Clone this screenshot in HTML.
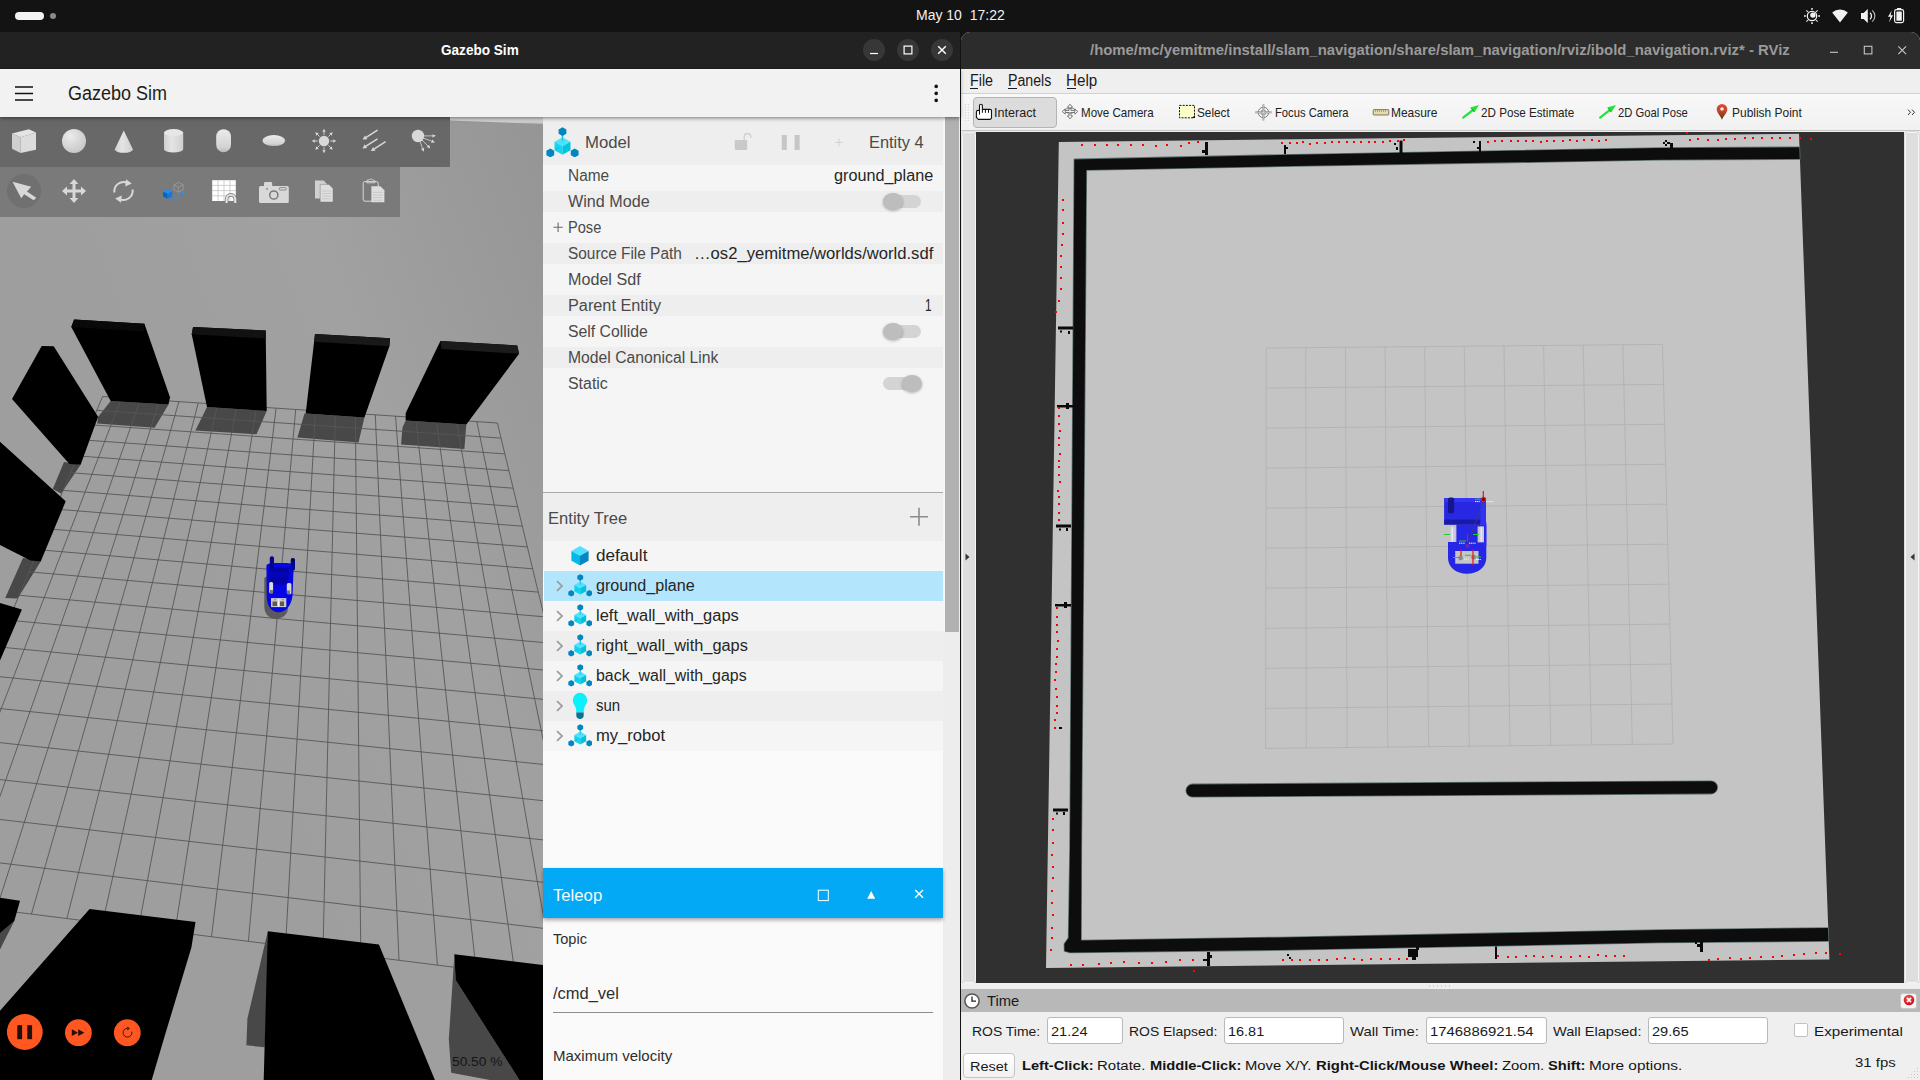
<!DOCTYPE html>
<html><head><meta charset="utf-8"><title>Gazebo Sim + RViz</title>
<style>
*{box-sizing:border-box;margin:0;padding:0}
html,body{width:1920px;height:1080px;overflow:hidden;background:#131313}
body{position:relative;font-family:"Liberation Sans","DejaVu Sans",sans-serif;color:#222}
.abs{position:absolute}
.t{position:absolute;white-space:nowrap;line-height:1;transform-origin:0 0}
.wb{top:39px;width:22px;height:22px;border-radius:11px;background:#373737}
.stripe{position:absolute;left:543px;width:400px;height:21px;background:#eeeeee}
.trk{position:absolute;left:883px;width:38px;height:13px;border-radius:7px;background:#d4d4d4}
.knob{position:absolute;width:20px;height:17px;border-radius:50%;background:#bdbdbd;box-shadow:0 1px 3px rgba(0,0,0,.28)}
.row{position:absolute;left:543px;width:400px;height:30px}
.fld{position:absolute;height:27px;background:#fff;border:1px solid #b9b9b9;border-radius:3px}
</style></head>
<body>
<div class="abs" style="left:0;top:0;width:1920px;height:32px;background:#131313"></div>
<div class="abs" style="left:15px;top:12px;width:29px;height:8px;border-radius:4px;background:#f2f2f2"></div>
<div class="abs" style="left:50px;top:13px;width:6px;height:6px;border-radius:3px;background:#8a8a8a"></div>
<div class="t" style="left:916.3px;top:8.0px;font-size:14.6px;color:#f2f2f2;transform:scaleX(0.959);">May 10&nbsp; 17:22</div>
<svg class="abs" style="left:1800px;top:4px" width="112" height="24" viewBox="1800 4 112 24">
  <circle cx="1812" cy="16" r="4.700" stroke="#f2f2f2" fill="none" stroke-width="1.300"/>
  <g fill="#cfcfcf"><rect x="1811.100" y="8" width="1.800" height="1.800"/><rect x="1811.100" y="22.200" width="1.800" height="1.800"/><rect x="1804" y="15.100" width="1.800" height="1.800"/><rect x="1818.200" y="15.100" width="1.800" height="1.800"/></g>
  <path d="M1806.300 10.300l1.900 1.900M1817.700 10.300l-1.900 1.900M1806.300 21.700l1.900-1.900M1817.700 21.700l-1.900-1.900" stroke="#e0e0e0" stroke-width="1.100"/>
  <circle cx="1812.900" cy="15.100" r="2.700" fill="#f2f2f2"/>
  <path d="M1832.2 12.6a11.5 11.5 0 0 1 15.6 0L1840 22.6z" fill="#f2f2f2"/>
  <path d="M1861 13h2.6l4.2-4v14l-4.2-4H1861z" fill="#f2f2f2"/>
  <path d="M1870 12.8a4.2 4.2 0 0 1 0 6.4" stroke="#f2f2f2" stroke-width="1.3" fill="none"/>
  <path d="M1872.3 10.3a7.6 7.6 0 0 1 0 11.4" stroke="#bdbdbd" stroke-width="1.1" fill="none"/>
  <path d="M1891.7 10.400l-3.700 6.400h2.500l-1.500 5.600 4.100-7.200h-2.500z" fill="#f2f2f2"/>
  <rect x="1894.6" y="9.6" width="9" height="13" rx="1.8" fill="none" stroke="#f2f2f2" stroke-width="1.2"/>
  <rect x="1897" y="8" width="4.2" height="1.8" fill="#f2f2f2"/>
  <rect x="1896.4" y="11.4" width="5.4" height="9.4" rx=".5" fill="#f2f2f2"/>
</svg>

<div class="abs" style="left:0;top:32px;width:960px;height:1048px;background:#fafafa"></div>
<div class="abs" style="left:0;top:32px;width:960px;height:37px;background:#222222"></div>
<div class="t" style="left:441.3px;top:42.0px;font-size:15px;color:#ffffff;font-weight:bold;transform:scaleX(0.905);">Gazebo Sim</div>
<div class="abs wb" style="left:863px"></div><div class="abs wb" style="left:897px"></div><div class="abs wb" style="left:931px"></div>
<svg class="abs" style="left:862px;top:38px" width="92" height="24" viewBox="862 38 92 24" stroke="#ffffff" stroke-width="1.2" fill="none">
  <path d="M870 53.5h8"/><rect x="904.1" y="46.1" width="7.8" height="7.8"/><path d="M938.2 46.2l7.6 7.6M945.8 46.2l-7.6 7.6" stroke-width="1.4"/>
</svg>
<div class="abs" style="left:0;top:69px;width:960px;height:48px;background:#f2f2f2;box-shadow:0 1px 4px rgba(0,0,0,.5);z-index:5"></div>
<svg class="abs" style="left:10px;top:80px;z-index:6" width="30" height="26" viewBox="10 80 30 26"><path d="M15 87h18M15 93.5h18M15 100h18" stroke="#111" stroke-width="1.7"/></svg>
<svg class="abs" style="left:930px;top:80px;z-index:6" width="12" height="26" viewBox="930 80 12 26" fill="#111"><circle cx="936.2" cy="86.4" r="1.8"/><circle cx="936.2" cy="93.4" r="1.8"/><circle cx="936.2" cy="100.4" r="1.8"/></svg>
<div class="t" style="left:68.2px;top:84.0px;font-size:19.6px;color:#1c1c1c;transform:scaleX(0.918);z-index:6;">Gazebo Sim</div>
<div class="abs" style="left:0;top:117px;width:543px;height:963px;overflow:hidden;background:#9d9d9d">
<svg class="abs" style="left:0;top:0" width="543" height="963" viewBox="0 117 543 963">
<defs><linearGradient id="bgg" x1="1" y1="0" x2="0.3" y2="0.45"><stop offset="0" stop-color="#959595"/><stop offset=".5" stop-color="#a1a1a1"/><stop offset="1" stop-color="#9e9e9e"/></linearGradient><linearGradient id="sky" x1="0" y1="0" x2="0" y2="1"><stop offset="0" stop-color="#d6d6d6"/><stop offset=".7" stop-color="#cfcfcf"/><stop offset="1" stop-color="#b4b4b4"/></linearGradient></defs>
<rect x="0" y="117" width="543" height="963" fill="url(#bgg)"/>
<polygon points="360,117 543,117 543,124 450,120.600 380,117.800" fill="url(#sky)"/>
<polygon points="110.7,401.0 168.5,404.6 154.6,427.8 97.2,423.4 98.0,417.0" fill="#484848"/>
<polygon points="207.0,407.0 266.7,411.1 256.5,434.3 195.4,430.6" fill="#484848"/>
<polygon points="304.5,413.5 364.4,417.6 358.5,442.6 297.4,437.6" fill="#484848"/>
<polygon points="405.7,420.4 466.3,424.4 464.4,449.1 401.1,444.4 402.4,427.8" fill="#484848"/>
<polygon points="64.0,462.0 80.6,464.8 61.1,493.5 52.8,488.9" fill="#484848"/>
<polygon points="23.1,557.8 40.7,561.5 17.6,598.5 5.2,598.1" fill="#484848"/>
<polygon points="267.8,931.3 247.4,1018.8 246.4,1045.3 264.7,1047.3 268.0,980.0" fill="#484848"/>
<polygon points="454.3,956.0 448.8,1039.2 451.2,1072.8 490.0,1080.0 519.4,1080.0 455.7,980.1" fill="#484848"/>
<polygon points="14.3,921.0 0.0,933.3 0.0,949.6" fill="#484848"/>
<path d="M264.300 578L267 576V600L288 608C288 614 283 618.700 276 618.700C268 618.700 264.300 613 264.300 606z" fill="#5b5b5b"/>
<path d="M102.6 396.5L-107.5 896.6M102.6 396.5L497.4 423.0M121.6 397.7L-73.2 900.9M96.8 410.3L501.0 438.1M140.6 399.0L-38.6 905.3M90.7 424.8L504.8 453.9M159.7 400.3L-3.7 909.6M84.3 440.0L508.9 470.6M178.9 401.6L31.4 914.1M77.6 455.9L513.1 488.2M198.2 402.9L66.9 918.5M70.6 472.7L517.6 506.7M217.5 404.2L102.6 923.0M63.1 490.4L522.3 526.2M236.9 405.5L138.6 927.5M55.3 509.1L527.3 546.9M256.5 406.8L174.9 932.1M47.0 528.8L532.6 568.8M276.1 408.1L211.5 936.7M38.2 549.7L538.2 592.1M295.7 409.4L248.4 941.3M28.9 571.8L544.2 616.8M315.5 410.8L285.5 946.0M19.1 595.3L550.6 643.2M335.4 412.1L323.0 950.7M8.6 620.2L557.4 671.3M355.3 413.4L360.8 955.5M-2.6 646.8L564.7 701.4M375.3 414.8L399.0 960.3M-14.5 675.3L572.5 733.6M395.5 416.1L437.4 965.1M-27.3 705.7L580.8 768.3M415.7 417.5L476.1 970.0M-41.0 738.3L589.9 805.7M436.0 418.9L515.2 974.9M-55.8 773.4L599.6 846.2M456.3 420.2L554.6 979.9M-71.7 811.2L610.2 890.0M476.8 421.6L594.3 984.9M-88.9 852.2L621.8 937.8M497.4 423.0L634.4 989.9M-107.5 896.6L634.4 989.9" stroke="#575757" stroke-width=".9" fill="none"/>
<polygon points="74.1,319.4 144.4,323.7 170.0,397.2 168.5,404.6 110.7,401.0 71.3,326.9" fill="#000"/>
<polygon points="193.1,326.9 265.7,330.6 266.7,411.1 207.0,407.0 191.7,334.3" fill="#000"/>
<polygon points="315.0,333.9 390.0,338.3 389.4,346.3 364.4,417.6 305.7,413.5 314.1,341.7" fill="#000"/>
<polygon points="440.4,341.1 517.2,345.4 519.1,353.7 466.3,424.4 405.7,420.4 405.7,413.0" fill="#000"/>
<polygon points="41.7,345.9 53.7,346.3 98.1,416.7 80.6,464.8 69.4,463.9 12.0,399.0" fill="#000"/>
<polygon points="0.0,441.7 65.7,501.3 40.7,561.5 30.6,560.6 0.0,545.0" fill="#000"/>
<polygon points="0.0,603.1 21.9,609.6 0.0,660.6" fill="#000"/>
<polygon points="0.0,897.7 20.0,900.7 14.3,921.1 0.0,933.3" fill="#000"/>
<polygon points="89.6,908.9 195.5,922.1 191.4,947.6 165.0,1035.0 151.7,1080.0 0.0,1080.0 0.0,1010.7" fill="#000"/>
<polygon points="267.8,931.3 378.9,944.5 434.9,1080.0 263.7,1080.0" fill="#000"/>
<polygon points="454.3,954.3 543.0,965.0 543.0,1080.0 519.4,1080.0 455.7,980.1" fill="#000"/>
<polygon points="74.1,319.4 144.4,323.7 143.5,331.5 71.3,326.9" fill="#090909"/>
<polygon points="193.1,326.9 265.7,330.6 265.8,338.5 191.7,334.3" fill="#111111"/>
<polygon points="315.0,333.9 390.0,338.3 389.4,346.3 314.1,341.7" fill="#191919"/>
<polygon points="440.4,341.1 517.2,345.4 519.1,353.7 441.3,349.1" fill="#1b1b1b"/>
<g>
<path d="M266.400 566C266.400 563.500 270 563.100 280 563.100S293.700 563.500 293.700 566L292.500 596C291 606 286 612.200 278.500 612.200C271 612.200 267.500 606 266.800 598z" fill="#0505e6"/>
<path d="M268.700 567.800H289.500L288 584.400H270z" fill="#0303a6"/>
<rect x="268.700" y="572" width="20.500" height="5" fill="#0404b8"/>
<rect x="269.800" y="556.200" width="4.200" height="12" rx="2" fill="#02028a"/>
<rect x="290.700" y="558" width="4.300" height="12.600" rx="2" fill="#02028a"/><circle cx="292.800" cy="559.800" r="1.300" fill="#060618"/>
<rect x="269.200" y="581.900" width="3.900" height="11.300" rx="1.500" fill="#dcdcdc"/><rect x="270" y="590" width="3" height="3.500" fill="#777"/>
<rect x="286.800" y="583" width="4.600" height="11.200" rx="1.500" fill="#d4d4d4"/><rect x="287" y="590.500" width="3" height="3.500" fill="#777"/>
<rect x="271" y="598.100" width="15.300" height="9" fill="#c9c9c9"/>
<rect x="272.500" y="601.500" width="4.500" height="4.500" fill="#595959"/><rect x="280" y="601.500" width="4" height="4.500" fill="#595959"/><rect x="278" y="598.500" width="1.200" height="8.500" fill="#f2f2f2"/>
<rect x="274" y="599" width="2" height="1.300" fill="#ff7a1a"/><rect x="282" y="599" width="2" height="1.300" fill="#ff7a1a"/>
</g>
<rect x="0" y="117" width="450" height="50" fill="#686868"/><rect x="0" y="167" width="400" height="50" fill="#7a7a7a"/>
<circle cx="24" cy="191" r="17" fill="#707070"/>
<defs><radialGradient id="sph" cx=".35" cy=".3" r=".8"><stop offset="0" stop-color="#ececec"/><stop offset="1" stop-color="#c4c4c4"/></radialGradient><linearGradient id="cyl" x1="0" y1="0" x2="1" y2="0"><stop offset="0" stop-color="#d0d0d0"/><stop offset=".4" stop-color="#e4e4e4"/><stop offset="1" stop-color="#cfcfcf"/></linearGradient><linearGradient id="cap" x1="0" y1="0" x2="0" y2="1"><stop offset="0" stop-color="#ececec"/><stop offset=".8" stop-color="#d2d2d2"/><stop offset="1" stop-color="#b8b8b8"/></linearGradient></defs>
<path d="M12 133.600L28.800 129.200 36 132.400 20.600 137.200z" fill="#e4e4e4"/><path d="M12 133.600L20.600 137.200V153L12 148.800z" fill="#cfcfcf"/><path d="M20.600 137.200L36 132.400V149.800L20.600 153z" fill="#dcdcdc"/>
<circle cx="74" cy="141" r="12" fill="url(#sph)"/>
<path d="M123.750 130.500L133 149.600A9.200 3.600 0 0 1 114.700 149.600z" fill="url(#cyl)"/>
<path d="M164 132.600V149A9.600 3.600 0 0 0 183.200 149V132.600z" fill="url(#cyl)"/><ellipse cx="173.600" cy="132.600" rx="9.600" ry="3.500" fill="#e6e6e6"/>
<rect x="216.200" y="129.200" width="14.800" height="23" rx="7.400" fill="url(#cap)"/>
<ellipse cx="273.800" cy="140.600" rx="11.300" ry="5.500" fill="url(#cap)"/>
<circle cx="324" cy="141" r="5.200" fill="#d8d8d8"/><path d="M330.20 141.00L333.50 141.00" stroke="#d8d8d8" stroke-width=".9"/><path d="M336.20 141.00L333.20 142.70L333.20 139.30z" fill="#d8d8d8"/><path d="M328.38 145.38L330.72 147.72" stroke="#d8d8d8" stroke-width=".9"/><path d="M332.63 149.63L329.30 148.71L331.71 146.30z" fill="#d8d8d8"/><path d="M324.00 147.20L324.00 150.50" stroke="#d8d8d8" stroke-width=".9"/><path d="M324.00 153.20L322.30 150.20L325.70 150.20z" fill="#d8d8d8"/><path d="M319.62 145.38L317.28 147.72" stroke="#d8d8d8" stroke-width=".9"/><path d="M315.37 149.63L316.29 146.30L318.70 148.71z" fill="#d8d8d8"/><path d="M317.80 141.00L314.50 141.00" stroke="#d8d8d8" stroke-width=".9"/><path d="M311.80 141.00L314.80 139.30L314.80 142.70z" fill="#d8d8d8"/><path d="M319.62 136.62L317.28 134.28" stroke="#d8d8d8" stroke-width=".9"/><path d="M315.37 132.37L318.70 133.29L316.29 135.70z" fill="#d8d8d8"/><path d="M324.00 134.80L324.00 131.50" stroke="#d8d8d8" stroke-width=".9"/><path d="M324.00 128.80L325.70 131.80L322.30 131.80z" fill="#d8d8d8"/><path d="M328.38 136.62L330.72 134.28" stroke="#d8d8d8" stroke-width=".9"/><path d="M332.63 132.37L331.71 135.70L329.30 133.29z" fill="#d8d8d8"/>
<path d="M377.50 130.10L366.14 137.34" stroke="#d8d8d8" stroke-width="1.5"/><path d="M362.60 139.60L364.96 135.49L367.32 139.20z" fill="#d8d8d8"/><path d="M377.50 138.90L365.95 146.16" stroke="#d8d8d8" stroke-width="1.5"/><path d="M362.40 148.40L364.78 144.30L367.13 148.03z" fill="#d8d8d8"/><path d="M385.60 141.60L374.33 148.83" stroke="#d8d8d8" stroke-width="1.5"/><path d="M370.80 151.10L373.15 146.98L375.52 150.68z" fill="#d8d8d8"/>
<circle cx="418" cy="136" r="6.200" fill="#d8d8d8"/>
<path d="M423.00 135.94L432.40 135.84" stroke="#d8d8d8" stroke-width="0.8"/><path d="M436.00 135.80L432.42 137.54L432.38 134.14z" fill="#d8d8d8"/>
<path d="M422.68 137.76L431.63 141.13" stroke="#d8d8d8" stroke-width="0.8"/><path d="M435.00 142.40L431.03 142.72L432.23 139.54z" fill="#d8d8d8"/>
<path d="M421.54 139.54L427.85 145.85" stroke="#d8d8d8" stroke-width="0.8"/><path d="M430.40 148.40L426.65 147.06L429.06 144.65z" fill="#d8d8d8"/>
<path d="M419.72 140.69L422.56 148.42" stroke="#d8d8d8" stroke-width="0.8"/><path d="M423.80 151.80L420.96 149.01L424.16 147.83z" fill="#d8d8d8"/>
<path d="M12.500 181.700L31.250 186.750 26.900 191.500 36.250 197.750 33.750 200.200 24.200 194.200 21.250 198.250z" fill="#d8d8d8"/>
<path d="M74 179l4.400 5h-2.900v5.500H81v-2.900l5 4.400-5 4.400v-2.900h-5.500V198h2.900L74 203l-4.400-5h2.900v-5.500H67v2.900l-5-4.400 5-4.400v2.900h5.500V184h-2.900z" fill="#d8d8d8"/>
<path d="M114.400 192.500a9.300 9.300 0 0 1 13.200-9.600" fill="none" stroke="#d8d8d8" stroke-width="2"/><path d="M126 179.200l5.800 4.200-6.600 3z" fill="#d8d8d8"/>
<path d="M132.600 189.500a9.300 9.300 0 0 1-13.200 9.600" fill="none" stroke="#d8d8d8" stroke-width="2"/><path d="M121 202.800l-5.800-4.200 6.600-3z" fill="#d8d8d8"/>
<path d="M163 191.400l4.600-2.400 4.600 2.400v5l-4.600 2.400-4.600-2.400z" fill="#1f8ff0"/><path d="M163 191.400l4.600 2.400v5l-4.600-2.400z" fill="#0f62b8"/><path d="M167.600 193.800l4.600-2.400v5l-4.600 2.400z" fill="#1976d2"/>
<path d="M174 184.800l4.600-2.400 4.600 2.400v5l-4.600 2.400-4.600-2.400zM174 184.800l4.600 2.400 4.600-2.400M178.600 187.200v5" fill="none" stroke="#a4a4a4" stroke-width=".7"/>
<path d="M170.500 198.200l2.500 1.400 11.400-6-3-1.800" fill="none" stroke="#2a8fef" stroke-width="1"/>
<rect x="212.200" y="180.200" width="23.600" height="20.800" fill="#ffffff"/><path d="M218.100 180.200v20.800M224 180.200v20.800M229.900 180.200v20.800M212.200 185.400h23.600M212.200 190.600h23.600M212.200 195.800h23.600" stroke="#c4c4c4" stroke-width=".8"/>
<path d="M226.600 203v-3.800a4.300 4.300 0 0 1 8.600 0V203" fill="none" stroke="#8a8a8a" stroke-width="3.600"/><path d="M226.600 203v-3.800a4.300 4.300 0 0 1 8.600 0V203" fill="none" stroke="#e8e8e8" stroke-width="1.800"/>
<path d="M260.500 186h3.500v-2.600a1.400 1.400 0 0 1 1.400-1.400h5.400a1.400 1.400 0 0 1 1.400 1.400V186h15.100a1.500 1.500 0 0 1 1.500 1.500v14a1.500 1.500 0 0 1-1.500 1.500h-26.800a1.500 1.500 0 0 1-1.500-1.500v-14a1.500 1.500 0 0 1 1.500-1.500z" fill="#d8d8d8"/>
<circle cx="273.800" cy="195" r="4.100" fill="none" stroke="#7a7a7a" stroke-width="1.500"/><rect x="279.300" y="187.600" width="7" height="2.400" rx=".6" fill="none" stroke="#7a7a7a" stroke-width=".8"/><circle cx="267" cy="188.800" r=".9" fill="#7a7a7a"/>
<path d="M315 180.600h8.600l3.400 3.400V198.400H315z" fill="#d0d0d0"/><path d="M320.200 184.400h8.800l4 4V202h-12.800z" fill="#dedede" stroke="#7a7a7a" stroke-width=".5"/><path d="M322 191h9.400M322 193.600h9.400M322 196.200h9.400M322 198.800h9.400" stroke="#c2c2c2" stroke-width=".8"/>
<rect x="363.200" y="181.600" width="15" height="19.600" rx="1.600" fill="none" stroke="#d8d8d8" stroke-width="1"/><path d="M366.800 182.800v-1.600a1.200 1.200 0 0 1 1.200-1.200h1a2 1.600 0 0 1 3.600 0h1a1.200 1.200 0 0 1 1.200 1.200v1.600z" fill="none" stroke="#d8d8d8" stroke-width=".9"/>
<path d="M371.400 186.200h9l4 4V202.200h-13z" fill="#dedede"/><path d="M373 192.400h9.600M373 195h9.600M373 197.600h9.600M373 200.200h9.600" stroke="#c2c2c2" stroke-width=".8"/>
<circle cx="24.800" cy="1032" r="17.900" fill="#ff5722"/><rect x="17.300" y="1025.200" width="4.800" height="14" fill="#241008"/><rect x="27.300" y="1025.200" width="4.800" height="14" fill="#241008"/>
<circle cx="78.400" cy="1032.700" r="13.400" fill="#ff5722"/><path d="M71.800 1029.300l6.200 3.400-6.200 3.400zM78.200 1029.300l6.200 3.400-6.200 3.400z" fill="#241008"/>
<circle cx="127.300" cy="1032.700" r="13.400" fill="#ff5722"/><path d="M127.500 1028.300a4.400 4.400 0 1 0 4.300 3.400" fill="none" stroke="#3a1a0c" stroke-width="1"/><path d="M127.300 1026.400l2.600 2-2.600 2z" fill="#3a1a0c"/>
</svg>
</div>
<div class="t" style="left:452.2px;top:1055.0px;font-size:13.6px;color:#161616;transform:scaleX(1.010);">50.50 %</div>
<div class="abs" style="left:543px;top:117px;width:400px;height:376px;background:#f5f5f5"></div>
<div class="abs" style="left:943px;top:117px;width:17px;height:963px;background:#ededed"></div>
<div class="abs" style="left:943px;top:117px;width:2px;height:515px;background:#f5f5f5"></div>
<div class="abs" style="left:945px;top:117px;width:14px;height:515px;background:#b1b1b1"></div>
<div class="abs" style="left:543px;top:117px;width:400px;height:48px;background:#eeeeee"></div>
<svg class="abs" style="left:545.5px;top:126.6px" width="33" height="30.6" viewBox="0 0 33 30.6"><g>
<path d="M16.5 8v6" stroke="#1ab5dc" stroke-width="1.4"/>
<path d="M16.5 0.2l3.9 2.2v4.4l-3.9 2.2-3.9-2.2V2.4z" fill="#0286be"/>
<path d="M4.3 21.6l3.9 2.2v4.4l-3.9 2.2-3.9-2.2v-4.4z" fill="#0286be"/>
<path d="M28.7 21.6l3.9 2.2v4.4l-3.9 2.2-3.9-2.2v-4.4z" fill="#0286be"/>
<path d="M16.5 10.2l8 4.5-8 4.5-8-4.5z" fill="#4fe2ff"/>
<path d="M8.5 14.7l8 4.5v8.6l-8-4.5z" fill="#12d3f0"/>
<path d="M24.5 14.7l-8 4.5v8.6l8-4.5z" fill="#00c5de"/>
<path d="M16.5 10.4v4.2" stroke="#29c4ea" stroke-width="1.4"/>
<path d="M9.6 22.4l3-1.8M23.4 22.4l-3-1.8" stroke="#0bbbd6" stroke-width="1"/>
</g></svg>
<div class="t" style="left:584.7px;top:134.0px;font-size:16.2px;color:#4a4a4a;transform:scaleX(1.034);">Model</div>
<div class="t" style="left:868.9px;top:134.0px;font-size:16.2px;color:#4a4a4a;transform:scaleX(1.013);">Entity 4</div>
<svg class="abs" style="left:730px;top:128px" width="120" height="28" viewBox="730 128 120 28">
<rect x="734.8" y="140" width="12.4" height="10" rx="1.2" fill="#c9c9c9"/>
<path d="M744.2 140v-3.2a3.3 3.3 0 0 1 6.6 0v1.2" fill="none" stroke="#d0d0d0" stroke-width="1.3"/>
<rect x="781.8" y="135" width="5" height="15" fill="#c6c6c6"/><rect x="794.6" y="135" width="5" height="15" fill="#c6c6c6"/>
<path d="M835 142.4h8M839 138.4v8" stroke="#d2d2d2" stroke-width="1"/>
</svg>
<div class="t" style="left:568.4px;top:168.0px;font-size:15.6px;color:#4a4a4a;transform:scaleX(0.988);">Name</div>
<div class="stripe" style="top:191px"></div>
<div class="t" style="left:568.4px;top:194.0px;font-size:15.6px;color:#4a4a4a;transform:scaleX(1.035);">Wind Mode</div>
<div class="t" style="left:568.4px;top:220.0px;font-size:15.6px;color:#4a4a4a;transform:scaleX(0.937);">Pose</div>
<div class="stripe" style="top:243px"></div>
<div class="t" style="left:568.4px;top:246.0px;font-size:15.6px;color:#4a4a4a;transform:scaleX(0.987);">Source File Path</div>
<div class="t" style="left:568.4px;top:272.0px;font-size:15.6px;color:#4a4a4a;transform:scaleX(1.035);">Model Sdf</div>
<div class="stripe" style="top:295px"></div>
<div class="t" style="left:568.4px;top:298.0px;font-size:15.6px;color:#4a4a4a;transform:scaleX(1.043);">Parent Entity</div>
<div class="t" style="left:568.4px;top:324.0px;font-size:15.6px;color:#4a4a4a;transform:scaleX(1.012);">Self Collide</div>
<div class="stripe" style="top:347px"></div>
<div class="t" style="left:568.4px;top:350.0px;font-size:15.6px;color:#4a4a4a;transform:scaleX(1.009);">Model Canonical Link</div>
<div class="t" style="left:568.4px;top:376.0px;font-size:15.6px;color:#4a4a4a;transform:scaleX(1.021);">Static</div>
<svg class="abs" style="left:552px;top:221px" width="12" height="12" viewBox="552 221 12 12"><path d="M553.4 227.3h9.4M558.1 222.6v9.4" stroke="#6a6a6a" stroke-width="1.1"/></svg>
<div class="t" style="left:833.6px;top:168.0px;font-size:15.6px;color:#262626;transform:scaleX(1.040);">ground_plane</div>
<div class="t" style="left:693.7px;top:246.0px;font-size:15.6px;color:#262626;transform:scaleX(1.066);">&#8230;os2_yemitme/worlds/world.sdf</div>
<div class="t" style="left:925.2px;top:298.0px;font-size:15.6px;color:#262626;transform:scaleX(0.760);">1</div>
<div class="trk" style="top:195.0px"></div>
<div class="knob" style="left:883px;top:193.0px"></div>
<div class="trk" style="top:325.0px"></div>
<div class="knob" style="left:883px;top:323.0px"></div>
<div class="trk" style="top:377.0px"></div>
<div class="knob" style="left:902px;top:375.0px"></div>
<div class="abs" style="left:543px;top:492px;width:400px;height:1px;background:#a8a8a8"></div>
<div class="abs" style="left:543px;top:493px;width:400px;height:48px;background:#eeeeee"></div>
<div class="t" style="left:548.3px;top:510.0px;font-size:16.2px;color:#4a4a4a;transform:scaleX(1.024);">Entity Tree</div>
<svg class="abs" style="left:908px;top:506px" width="22" height="22" viewBox="908 506 22 22"><path d="M910 516.8h18M919 507.8v18" stroke="#8c8c8c" stroke-width="1.6"/></svg>
<div class="row" style="top:541px;background:#f5f5f5"></div>
<div class="t" style="left:596.4px;top:548.0px;font-size:15.6px;color:#262626;transform:scaleX(1.098);">default</div>
<svg class="abs" style="left:570px;top:545px" width="20" height="22" viewBox="0 0 20 22"><path d="M10 1l8.6 4.9L10 10.8 1.4 5.9z" fill="#4fe2ff"/><path d="M1.4 5.9L10 10.8v9.8l-8.6-4.9z" fill="#06b8e8"/><path d="M18.6 5.9L10 10.8v9.8l8.6-4.9z" fill="#0687c2"/></svg>
<div class="row" style="top:571px;background:#b3e5fc;left:544px;width:398.500px"></div>
<div class="t" style="left:596.4px;top:578.0px;font-size:15.6px;color:#262626;transform:scaleX(1.034);">ground_plane</div>
<svg class="abs" style="left:555px;top:580px" width="10" height="12" viewBox="0 0 10 12"><path d="M2 1.2l5 4.8-5 4.8" fill="none" stroke="#9a9a9a" stroke-width="1.7"/></svg>
<svg class="abs" style="left:567.6px;top:574.0px" width="24.5" height="22.7" viewBox="0 0 33 30.6"><g>
<path d="M16.5 8v6" stroke="#1ab5dc" stroke-width="1.4"/>
<path d="M16.5 0.2l3.9 2.2v4.4l-3.9 2.2-3.9-2.2V2.4z" fill="#0286be"/>
<path d="M4.3 21.6l3.9 2.2v4.4l-3.9 2.2-3.9-2.2v-4.4z" fill="#0286be"/>
<path d="M28.7 21.6l3.9 2.2v4.4l-3.9 2.2-3.9-2.2v-4.4z" fill="#0286be"/>
<path d="M16.5 10.2l8 4.5-8 4.5-8-4.5z" fill="#4fe2ff"/>
<path d="M8.5 14.7l8 4.5v8.6l-8-4.5z" fill="#12d3f0"/>
<path d="M24.5 14.7l-8 4.5v8.6l8-4.5z" fill="#00c5de"/>
<path d="M16.5 10.4v4.2" stroke="#29c4ea" stroke-width="1.4"/>
<path d="M9.6 22.4l3-1.8M23.4 22.4l-3-1.8" stroke="#0bbbd6" stroke-width="1"/>
</g></svg>
<div class="row" style="top:601px;background:#f5f5f5"></div>
<div class="t" style="left:596.4px;top:608.0px;font-size:15.6px;color:#262626;transform:scaleX(1.056);">left_wall_with_gaps</div>
<svg class="abs" style="left:555px;top:610px" width="10" height="12" viewBox="0 0 10 12"><path d="M2 1.2l5 4.8-5 4.8" fill="none" stroke="#9a9a9a" stroke-width="1.7"/></svg>
<svg class="abs" style="left:567.6px;top:604.0px" width="24.5" height="22.7" viewBox="0 0 33 30.6"><g>
<path d="M16.5 8v6" stroke="#1ab5dc" stroke-width="1.4"/>
<path d="M16.5 0.2l3.9 2.2v4.4l-3.9 2.2-3.9-2.2V2.4z" fill="#0286be"/>
<path d="M4.3 21.6l3.9 2.2v4.4l-3.9 2.2-3.9-2.2v-4.4z" fill="#0286be"/>
<path d="M28.7 21.6l3.9 2.2v4.4l-3.9 2.2-3.9-2.2v-4.4z" fill="#0286be"/>
<path d="M16.5 10.2l8 4.5-8 4.5-8-4.5z" fill="#4fe2ff"/>
<path d="M8.5 14.7l8 4.5v8.6l-8-4.5z" fill="#12d3f0"/>
<path d="M24.5 14.7l-8 4.5v8.6l8-4.5z" fill="#00c5de"/>
<path d="M16.5 10.4v4.2" stroke="#29c4ea" stroke-width="1.4"/>
<path d="M9.6 22.4l3-1.8M23.4 22.4l-3-1.8" stroke="#0bbbd6" stroke-width="1"/>
</g></svg>
<div class="row" style="top:631px;background:#eeeeee"></div>
<div class="t" style="left:596.4px;top:638.0px;font-size:15.6px;color:#262626;transform:scaleX(1.049);">right_wall_with_gaps</div>
<svg class="abs" style="left:555px;top:640px" width="10" height="12" viewBox="0 0 10 12"><path d="M2 1.2l5 4.8-5 4.8" fill="none" stroke="#9a9a9a" stroke-width="1.7"/></svg>
<svg class="abs" style="left:567.6px;top:634.0px" width="24.5" height="22.7" viewBox="0 0 33 30.6"><g>
<path d="M16.5 8v6" stroke="#1ab5dc" stroke-width="1.4"/>
<path d="M16.5 0.2l3.9 2.2v4.4l-3.9 2.2-3.9-2.2V2.4z" fill="#0286be"/>
<path d="M4.3 21.6l3.9 2.2v4.4l-3.9 2.2-3.9-2.2v-4.4z" fill="#0286be"/>
<path d="M28.7 21.6l3.9 2.2v4.4l-3.9 2.2-3.9-2.2v-4.4z" fill="#0286be"/>
<path d="M16.5 10.2l8 4.5-8 4.5-8-4.5z" fill="#4fe2ff"/>
<path d="M8.5 14.7l8 4.5v8.6l-8-4.5z" fill="#12d3f0"/>
<path d="M24.5 14.7l-8 4.5v8.6l8-4.5z" fill="#00c5de"/>
<path d="M16.5 10.4v4.2" stroke="#29c4ea" stroke-width="1.4"/>
<path d="M9.6 22.4l3-1.8M23.4 22.4l-3-1.8" stroke="#0bbbd6" stroke-width="1"/>
</g></svg>
<div class="row" style="top:661px;background:#f5f5f5"></div>
<div class="t" style="left:596.4px;top:668.0px;font-size:15.6px;color:#262626;transform:scaleX(1.022);">back_wall_with_gaps</div>
<svg class="abs" style="left:555px;top:670px" width="10" height="12" viewBox="0 0 10 12"><path d="M2 1.2l5 4.8-5 4.8" fill="none" stroke="#9a9a9a" stroke-width="1.7"/></svg>
<svg class="abs" style="left:567.6px;top:664.0px" width="24.5" height="22.7" viewBox="0 0 33 30.6"><g>
<path d="M16.5 8v6" stroke="#1ab5dc" stroke-width="1.4"/>
<path d="M16.5 0.2l3.9 2.2v4.4l-3.9 2.2-3.9-2.2V2.4z" fill="#0286be"/>
<path d="M4.3 21.6l3.9 2.2v4.4l-3.9 2.2-3.9-2.2v-4.4z" fill="#0286be"/>
<path d="M28.7 21.6l3.9 2.2v4.4l-3.9 2.2-3.9-2.2v-4.4z" fill="#0286be"/>
<path d="M16.5 10.2l8 4.5-8 4.5-8-4.5z" fill="#4fe2ff"/>
<path d="M8.5 14.7l8 4.5v8.6l-8-4.5z" fill="#12d3f0"/>
<path d="M24.5 14.7l-8 4.5v8.6l8-4.5z" fill="#00c5de"/>
<path d="M16.5 10.4v4.2" stroke="#29c4ea" stroke-width="1.4"/>
<path d="M9.6 22.4l3-1.8M23.4 22.4l-3-1.8" stroke="#0bbbd6" stroke-width="1"/>
</g></svg>
<div class="row" style="top:691px;background:#eeeeee"></div>
<div class="t" style="left:596.4px;top:698.0px;font-size:15.6px;color:#262626;transform:scaleX(0.962);">sun</div>
<svg class="abs" style="left:555px;top:700px" width="10" height="12" viewBox="0 0 10 12"><path d="M2 1.2l5 4.8-5 4.8" fill="none" stroke="#9a9a9a" stroke-width="1.7"/></svg>
<svg class="abs" style="left:570px;top:692px" width="20" height="28" viewBox="0 0 20 28"><path d="M10 .8a7.200 7.200 0 0 1 7.200 7.200c0 3.400-1.700 5-2.700 7.200-.6 1.400-.7 2.800-.8 4.300H6.300c-.1-1.500-.2-2.900-.8-4.300C4.500 13 2.800 11.400 2.800 8A7.200 7.200 0 0 1 10 .8z" fill="#0cf0fc"/><rect x="6.300" y="19.500" width="7.400" height="1" fill="#19b6f0"/><path d="M6.300 20.500h7.400v3.300c0 1.800-1.600 3.200-3.700 3.200s-3.700-1.400-3.700-3.200z" fill="#0a7391"/></svg>
<div class="row" style="top:721px;background:#f5f5f5"></div>
<div class="t" style="left:596.4px;top:728.0px;font-size:15.6px;color:#262626;transform:scaleX(1.064);">my_robot</div>
<svg class="abs" style="left:555px;top:730px" width="10" height="12" viewBox="0 0 10 12"><path d="M2 1.2l5 4.8-5 4.8" fill="none" stroke="#9a9a9a" stroke-width="1.7"/></svg>
<svg class="abs" style="left:567.6px;top:724.0px" width="24.5" height="22.7" viewBox="0 0 33 30.6"><g>
<path d="M16.5 8v6" stroke="#1ab5dc" stroke-width="1.4"/>
<path d="M16.5 0.2l3.9 2.2v4.4l-3.9 2.2-3.9-2.2V2.4z" fill="#0286be"/>
<path d="M4.3 21.6l3.9 2.2v4.4l-3.9 2.2-3.9-2.2v-4.4z" fill="#0286be"/>
<path d="M28.7 21.6l3.9 2.2v4.4l-3.9 2.2-3.9-2.2v-4.4z" fill="#0286be"/>
<path d="M16.5 10.2l8 4.5-8 4.5-8-4.5z" fill="#4fe2ff"/>
<path d="M8.5 14.7l8 4.5v8.6l-8-4.5z" fill="#12d3f0"/>
<path d="M24.5 14.7l-8 4.5v8.6l8-4.5z" fill="#00c5de"/>
<path d="M16.5 10.4v4.2" stroke="#29c4ea" stroke-width="1.4"/>
<path d="M9.6 22.4l3-1.8M23.4 22.4l-3-1.8" stroke="#0bbbd6" stroke-width="1"/>
</g></svg>
<div class="abs" style="left:543px;top:751px;width:400px;height:329px;background:#fafafa"></div>
<div class="abs" style="left:543px;top:868px;width:400px;height:50px;background:#03a9f4;box-shadow:0 2px 4px rgba(0,0,0,.35)"></div>
<div class="t" style="left:553.3px;top:887.0px;font-size:17.2px;color:#f4fbff;transform:scaleX(0.971);">Teleop</div>
<svg class="abs" style="left:810px;top:884px" width="120" height="22" viewBox="810 884 120 22">
<rect x="818.3" y="890.2" width="10" height="10.400" fill="none" stroke="#fff" stroke-width="1"/>
<path d="M871.200 891l4 7.800h-8z" fill="#fff"/>
<path d="M915.200 890l7.800 7.800M923 890l-7.800 7.800" stroke="#fff" stroke-width="1.400"/>
</svg>
<div class="t" style="left:553.3px;top:932.0px;font-size:14.4px;color:#2e2e2e;transform:scaleX(1.009);">Topic</div>
<div class="t" style="left:553.3px;top:986.0px;font-size:16px;color:#2e2e2e;transform:scaleX(1.029);">/cmd_vel</div>
<div class="abs" style="left:553px;top:1011.500px;width:380px;height:1px;background:#8d8d8d"></div>
<div class="t" style="left:553.3px;top:1049.0px;font-size:14.4px;color:#2e2e2e;transform:scaleX(1.042);">Maximum velocity</div>
<div class="abs" style="left:961px;top:32px;width:959px;height:1048px;background:#efefef;border-radius:9px 9px 0 0"></div>
<div class="abs" style="left:961px;top:32px;width:959px;height:37px;background:#2c2c2c;border-radius:9px 9px 0 0"></div>
<div class="t" style="left:1090.0px;top:42.0px;font-size:15px;color:#9a9a9a;font-weight:bold;transform:scaleX(0.993);">/home/mc/yemitme/install/slam_navigation/share/slam_navigation/rviz/ibold_navigation.rviz* - RViz</div>
<svg class="abs" style="left:1821px;top:38px" width="92" height="24" viewBox="1821 38 92 24" stroke="#c4c4c4" stroke-width="1.1" fill="none">
<path d="M1830 52.3h8"/><rect x="1864.3" y="46.3" width="7.600" height="7.600"/><path d="M1898.300 46.300l7.800 7.800M1906.100 46.300l-7.800 7.800" stroke-width="1.200"/></svg>
<div class="abs" style="left:961px;top:69px;width:959px;height:24px;background:#efefef"></div>
<div class="t" style="left:970.0px;top:73.0px;font-size:15.6px;color:#1a1a1a;transform:scaleX(0.915);">File</div>
<div class="t" style="left:1008.0px;top:73.0px;font-size:15.6px;color:#1a1a1a;transform:scaleX(0.908);">Panels</div>
<div class="t" style="left:1066.2px;top:73.0px;font-size:15.6px;color:#1a1a1a;transform:scaleX(0.973);">Help</div>
<div class="abs" style="left:970.3px;top:88px;width:8px;height:1.3px;background:#1a1a1a"></div>
<div class="abs" style="left:1008.3px;top:88px;width:9px;height:1.3px;background:#1a1a1a"></div>
<div class="abs" style="left:1066.5px;top:88px;width:9.5px;height:1.3px;background:#1a1a1a"></div>
<div class="abs" style="left:961px;top:92.5px;width:959px;height:38px;background:linear-gradient(#f8f8f8,#f1f1f1);border-top:1px solid #d2d2d2;border-bottom:1px solid #c6c6c6"></div>
<div class="abs" style="left:973.2px;top:97.2px;width:84.300px;height:30.400px;background:#dcdcdc;border:1px solid #b4b4b4;border-radius:4px"></div>
<svg class="abs" style="left:964px;top:103px" width="6" height="18" viewBox="0 0 6 18" fill="#c9c9c9"><g id="hd"><rect x=".8" y="1" width="1" height="1"/><rect x="3.800" y="1" width="1" height="1"/></g><use href="#hd" y="2.700"/><use href="#hd" y="5.400"/><use href="#hd" y="8.100"/><use href="#hd" y="10.800"/><use href="#hd" y="13.500"/><use href="#hd" y="16.200"/></svg>
<div class="t" style="left:994.0px;top:107.0px;font-size:12.1px;color:#222222;transform:scaleX(1.041);">Interact</div>
<div class="t" style="left:1080.5px;top:107.0px;font-size:12.1px;color:#222222;transform:scaleX(0.956);">Move Camera</div>
<div class="t" style="left:1197.3px;top:107.0px;font-size:12.1px;color:#222222;transform:scaleX(0.975);">Select</div>
<div class="t" style="left:1274.7px;top:107.0px;font-size:12.1px;color:#222222;transform:scaleX(0.927);">Focus Camera</div>
<div class="t" style="left:1391.2px;top:107.0px;font-size:12.1px;color:#222222;transform:scaleX(0.988);">Measure</div>
<div class="t" style="left:1481.2px;top:107.0px;font-size:12.1px;color:#222222;transform:scaleX(0.964);">2D Pose Estimate</div>
<div class="t" style="left:1618.4px;top:107.0px;font-size:12.1px;color:#222222;transform:scaleX(0.927);">2D Goal Pose</div>
<div class="t" style="left:1732.2px;top:107.0px;font-size:12.1px;color:#222222;transform:scaleX(0.989);">Publish Point</div>
<svg class="abs" style="left:974px;top:100px" width="946" height="24" viewBox="974 100 946 24">
<!-- hand -->
<path d="M979.500 110.400H978Q976.400 110.400 976.400 112V117.400L978.300 119.400H990.200L991.500 118.200V110.600Q991.500 109.400 990 109.400H982.400V105.600Q982.400 104.300 980.950 104.300Q979.500 104.300 979.500 105.600z" fill="#fff" stroke="#111" stroke-width="1.100" stroke-linejoin="round"/>
<path d="M979.500 110.400V114.600M982.400 109.400V112.800M985.400 109.400V112.800M988.500 109.400V112.800" stroke="#111" stroke-width="1" fill="none"/>
<!-- move camera -->
<g stroke="#6e6e6e" fill="#f4f4f4" stroke-width=".9">
<path d="M1070 104.200l2.600 3h-1.600v3.300h3.800v-1.600l3 2.600-3 2.600v-1.600H1071v3.400h1.600l-2.600 3-2.600-3h1.600v-3.400h-3.800v1.600l-3-2.600 3-2.600v1.600h3.800v-3.300h-1.600z"/>
<ellipse cx="1070" cy="110.600" rx="5" ry="2.400" fill="none"/>
</g>
<!-- select -->
<rect x="1179.500" y="105.400" width="15" height="12.400" fill="#fdfdc6" stroke="#111" stroke-width="1" stroke-dasharray="2 1.200"/>
<path d="M1195 115v3h-3z" fill="#111"/>
<!-- focus -->
<g stroke="#7a7a7a" fill="none" stroke-width="1">
<circle cx="1263.400" cy="112.400" r="5.200"/><circle cx="1263.400" cy="112.400" r="2.600" stroke-width=".7"/>
<path d="M1255.200 112.400h16.400M1263.400 104.200v16.400" stroke-width="1.700"/>
<path d="M1255.200 112.400h16.400M1263.400 104.200v16.400" stroke="#f2f2f2" stroke-width=".6"/>
</g>
<!-- measure -->
<rect x="1373.200" y="109.600" width="15.600" height="5.400" rx=".8" fill="#e6dba4" stroke="#6b6b6b" stroke-width=".9"/>
<path d="M1375.500 110v2M1377.500 110v2M1379.500 110v2M1381.500 110v2M1383.500 110v2M1385.500 110v2" stroke="#8a8360" stroke-width=".6"/>
<!-- green arrows -->
<g id="ga"><path d="M1463.200 117.600l9.600-7.500" stroke="#1fe43c" stroke-width="2.200" stroke-linecap="round"/><path d="M1479 105.100l-8.800 2.300 4.200 5.100z" fill="#1fe43c"/><path d="M1471.500 108.500l2.700 3.300" stroke="#0a8f22" stroke-width=".8"/></g>
<use href="#ga" x="136.900"/>
<!-- pin -->
<defs><linearGradient id="pg" x1="0" y1="0" x2="0" y2="1"><stop offset="0" stop-color="#e2492f"/><stop offset=".45" stop-color="#c2482a"/><stop offset="1" stop-color="#5a3417"/></linearGradient></defs>
<path d="M1722 104a5.300 5.300 0 0 1 5.300 5.300c0 3.400-3.600 6.200-5.300 10.400-1.700-4.200-5.300-7-5.300-10.400A5.300 5.300 0 0 1 1722 104z" fill="url(#pg)"/>
<circle cx="1722" cy="108.900" r="1.700" fill="#fff"/>
<!-- chevrons -->
<path d="M1908 109.600l2.500 2.700-2.500 2.700M1912 109.600l2.500 2.700-2.500 2.700" stroke="#333" stroke-width="1" fill="none"/>
</svg>
<div class="abs" style="left:961px;top:131px;width:959px;height:852px;background:#efefef"></div>
<div class="abs" style="left:961.5px;top:131.500px;width:14px;height:851px;background:#dedede;border:1px solid #f6f6f6;border-radius:3px;box-shadow:0 0 0 .5px #c8c8c8"></div>
<div class="abs" style="left:1904.500px;top:131.500px;width:14px;height:851px;background:#dedede;border:1px solid #f6f6f6;border-radius:3px;box-shadow:0 0 0 .5px #c8c8c8"></div>
<svg class="abs" style="left:962px;top:550px" width="12" height="14" viewBox="0 0 12 14"><path d="M3.500 3.500l4 3.500-4 3.500z" fill="#333"/></svg>
<svg class="abs" style="left:1906px;top:550px" width="12" height="14" viewBox="0 0 12 14"><path d="M8.500 3.500l-4 3.500 4 3.500z" fill="#333"/></svg>
<div class="abs" style="left:976px;top:132px;width:928px;height:851px;background:#303030"></div>
<svg class="abs" style="left:976px;top:132px" width="928" height="851" viewBox="976 132 928 851" shape-rendering="auto">
<polygon points="1058.8,141.900 1799,133.800 1829.400,959.400 1046,968.100" fill="#c4c4c4"/>
<path d="M1266.2 348.0L1265.6 748.4M1266.2 348.0L1662.5 344.4M1305.8 347.6L1306.3 748.0M1266.1 388.0L1663.5 384.4M1345.5 347.3L1347.1 747.5M1266.1 428.1L1664.6 424.3M1385.1 346.9L1387.8 747.1M1266.0 468.1L1665.7 464.3M1424.7 346.6L1428.6 746.6M1266.0 508.2L1666.7 504.2M1464.3 346.2L1469.3 746.2M1265.9 548.2L1667.8 544.2M1504.0 345.8L1510.0 745.8M1265.8 588.2L1668.8 584.2M1543.6 345.5L1550.8 745.3M1265.8 628.3L1669.8 624.1M1583.2 345.1L1591.5 744.9M1265.7 668.3L1670.9 664.1M1622.9 344.8L1632.3 744.4M1265.7 708.4L1672.0 704.0M1662.5 344.4L1673.0 744.0M1265.6 748.4L1673.0 744.0" stroke="#b0b0b1" stroke-width=".8" fill="none"/>
<polygon points="1074.4,159.4 1280.0,155.0 1660.0,148.0 1799.3,147.3 1799.7,159.0 1660.0,159.8 1280.0,166.3 1086.3,170.0 1081.3,850.0 1081.0,940.6 1280.0,937.5 1660.0,930.0 1828.0,928.0 1828.5,941.0 1660.0,942.5 1280.0,950.0 1070.0,952.5 1064.6,951.0 1064.4,944.0 1068.6,938.0 1070.0,850.0" fill="#0d0d0d" stroke="#5f7272" stroke-width="1.6" stroke-linejoin="round"/>
<polygon points="1074.4,159.4 1280.0,155.0 1660.0,148.0 1799.3,147.3 1799.7,159.0 1660.0,159.8 1280.0,166.3 1086.3,170.0 1081.3,850.0 1081.0,940.6 1280.0,937.5 1660.0,930.0 1828.0,928.0 1828.5,941.0 1660.0,942.5 1280.0,950.0 1070.0,952.5 1064.6,951.0 1064.4,944.0 1068.6,938.0 1070.0,850.0" fill="#0d0d0d"/>
<path d="M1192.5 790.600L1711 787.400" stroke="#5f7272" stroke-width="14" stroke-linecap="round"/>
<path d="M1192.500 790.600L1711 787.400" stroke="#0d0d0d" stroke-width="12.400" stroke-linecap="round"/>
<g fill="#0a0a0a"><rect x="1205" y="142" width="3" height="13"/><rect x="1202" y="150" width="3" height="3"/><rect x="1284" y="145" width="2" height="9"/><rect x="1286" y="147" width="2" height="2"/><rect x="1399.5" y="140.6" width="3" height="12.5"/><rect x="1394" y="143" width="2" height="2"/><rect x="1396" y="147" width="2" height="3"/><rect x="1479" y="141" width="2" height="11"/><rect x="1473" y="141" width="2" height="2"/><rect x="1477" y="147" width="2" height="2"/><rect x="1670" y="143" width="3" height="6"/><rect x="1667" y="142" width="3" height="2"/><rect x="1665" y="144" width="2" height="2"/><rect x="1663" y="142" width="2" height="2"/><rect x="1665" y="140" width="2" height="2"/><rect x="1058" y="326.5" width="15" height="3"/><rect x="1060" y="330.5" width="2" height="2"/><rect x="1068" y="331" width="2" height="3"/><rect x="1057" y="405" width="16" height="2.5"/><rect x="1066" y="403" width="3" height="6"/><rect x="1056" y="524.5" width="15" height="3"/><rect x="1059" y="528.5" width="2" height="2"/><rect x="1066" y="528" width="2" height="3"/><rect x="1055" y="604" width="16" height="2.5"/><rect x="1064" y="602" width="3" height="6"/><rect x="1059" y="727" width="3" height="2"/><rect x="1053" y="808.5" width="15" height="3"/><rect x="1056" y="812.5" width="2" height="2"/><rect x="1063" y="812" width="2" height="3"/><rect x="1207" y="952" width="3" height="14"/><rect x="1203" y="959" width="4" height="2"/><rect x="1210" y="955" width="2" height="3"/><rect x="1408" y="949" width="10" height="8"/><rect x="1412" y="957" width="4" height="3"/><rect x="1416" y="947" width="3" height="3"/><rect x="1495" y="946.5" width="2" height="12.5"/><rect x="1287" y="954" width="2" height="2"/><rect x="1289" y="957" width="2" height="2"/><rect x="1700" y="941" width="3" height="11"/><rect x="1697" y="944" width="3" height="3"/><rect x="1695" y="942" width="2" height="2"/></g>
<g fill="#ff0000"><rect x="1081" y="144" width="2" height="2"/><rect x="1094" y="144" width="2" height="2"/><rect x="1106" y="144" width="2" height="2"/><rect x="1117" y="144" width="2" height="2"/><rect x="1130" y="144" width="2" height="2"/><rect x="1142" y="144" width="2" height="2"/><rect x="1155" y="145" width="2" height="2"/><rect x="1166" y="144" width="2" height="2"/><rect x="1180" y="145" width="2" height="2"/><rect x="1188" y="142" width="2" height="2"/><rect x="1197" y="141" width="2" height="2"/><rect x="1281" y="142" width="2" height="2"/><rect x="1289" y="142" width="2" height="2"/><rect x="1296" y="142" width="2" height="2"/><rect x="1302" y="141" width="2" height="2"/><rect x="1309" y="143" width="2" height="2"/><rect x="1316" y="142" width="2" height="2"/><rect x="1324" y="142" width="2" height="2"/><rect x="1331" y="141" width="2" height="2"/><rect x="1338" y="141" width="2" height="2"/><rect x="1346" y="141" width="2" height="2"/><rect x="1353" y="141" width="2" height="2"/><rect x="1360" y="141" width="2" height="2"/><rect x="1368" y="141" width="2" height="2"/><rect x="1374" y="141" width="2" height="2"/><rect x="1382" y="141" width="2" height="2"/><rect x="1389" y="140" width="2" height="2"/><rect x="1397" y="140" width="2" height="2"/><rect x="1403" y="139" width="2" height="2"/><rect x="1487" y="141" width="2" height="2"/><rect x="1494" y="140" width="2" height="2"/><rect x="1501" y="140" width="2" height="2"/><rect x="1510" y="140" width="2" height="2"/><rect x="1517" y="140" width="2" height="2"/><rect x="1525" y="140" width="2" height="2"/><rect x="1532" y="140" width="2" height="2"/><rect x="1540" y="141" width="2" height="2"/><rect x="1546" y="140" width="2" height="2"/><rect x="1553" y="140" width="2" height="2"/><rect x="1562" y="140" width="2" height="2"/><rect x="1569" y="139" width="2" height="2"/><rect x="1576" y="140" width="2" height="2"/><rect x="1583" y="139" width="2" height="2"/><rect x="1591" y="139" width="2" height="2"/><rect x="1598" y="140" width="2" height="2"/><rect x="1605" y="139" width="2" height="2"/><rect x="1689" y="139" width="2" height="2"/><rect x="1697" y="138" width="2" height="2"/><rect x="1707" y="139" width="2" height="2"/><rect x="1717" y="139" width="2" height="2"/><rect x="1725" y="138" width="2" height="2"/><rect x="1734" y="138" width="2" height="2"/><rect x="1744" y="137" width="2" height="2"/><rect x="1752" y="137" width="2" height="2"/><rect x="1761" y="137" width="2" height="2"/><rect x="1771" y="137" width="2" height="2"/><rect x="1779" y="137" width="2" height="2"/><rect x="1789" y="137" width="2" height="2"/><rect x="1799" y="137" width="2" height="2"/><rect x="1810" y="138" width="2" height="2"/><rect x="1686" y="132" width="2" height="2"/><rect x="1062" y="199" width="2" height="2"/><rect x="1062" y="209" width="2" height="2"/><rect x="1062" y="222" width="2" height="2"/><rect x="1062" y="233" width="2" height="2"/><rect x="1061" y="244" width="2" height="2"/><rect x="1060" y="255" width="2" height="2"/><rect x="1060" y="266" width="2" height="2"/><rect x="1060" y="277" width="2" height="2"/><rect x="1060" y="288" width="2" height="2"/><rect x="1058" y="300" width="2" height="2"/><rect x="1055" y="311" width="2" height="2"/><rect x="1058" y="407" width="2" height="2"/><rect x="1058" y="415" width="2" height="2"/><rect x="1058" y="423" width="2" height="2"/><rect x="1059" y="430" width="2" height="2"/><rect x="1058" y="437" width="2" height="2"/><rect x="1058" y="444" width="2" height="2"/><rect x="1059" y="453" width="2" height="2"/><rect x="1058" y="460" width="2" height="2"/><rect x="1058" y="466" width="2" height="2"/><rect x="1058" y="474" width="2" height="2"/><rect x="1059" y="481" width="2" height="2"/><rect x="1057" y="490" width="2" height="2"/><rect x="1058" y="496" width="2" height="2"/><rect x="1058" y="503" width="2" height="2"/><rect x="1058" y="512" width="2" height="2"/><rect x="1058" y="519" width="2" height="2"/><rect x="1056" y="607" width="2" height="2"/><rect x="1056" y="616" width="2" height="2"/><rect x="1056" y="624" width="2" height="2"/><rect x="1056" y="631" width="2" height="2"/><rect x="1057" y="640" width="2" height="2"/><rect x="1056" y="648" width="2" height="2"/><rect x="1056" y="656" width="2" height="2"/><rect x="1055" y="663" width="2" height="2"/><rect x="1055" y="671" width="2" height="2"/><rect x="1054" y="679" width="2" height="2"/><rect x="1055" y="688" width="2" height="2"/><rect x="1056" y="696" width="2" height="2"/><rect x="1056" y="705" width="2" height="2"/><rect x="1056" y="712" width="2" height="2"/><rect x="1054" y="719" width="2" height="2"/><rect x="1054" y="727" width="2" height="2"/><rect x="1052" y="818" width="2" height="2"/><rect x="1052" y="829" width="2" height="2"/><rect x="1052" y="842" width="2" height="2"/><rect x="1051" y="854" width="2" height="2"/><rect x="1052" y="866" width="2" height="2"/><rect x="1052" y="877" width="2" height="2"/><rect x="1051" y="890" width="2" height="2"/><rect x="1051" y="902" width="2" height="2"/><rect x="1052" y="914" width="2" height="2"/><rect x="1051" y="927" width="2" height="2"/><rect x="1051" y="937" width="2" height="2"/><rect x="1050" y="949" width="2" height="2"/><rect x="1070" y="964" width="2" height="2"/><rect x="1082" y="964" width="2" height="2"/><rect x="1098" y="963" width="2" height="2"/><rect x="1110" y="962" width="2" height="2"/><rect x="1123" y="961" width="2" height="2"/><rect x="1138" y="962" width="2" height="2"/><rect x="1151" y="962" width="2" height="2"/><rect x="1165" y="961" width="2" height="2"/><rect x="1179" y="959" width="2" height="2"/><rect x="1192" y="959" width="2" height="2"/><rect x="1193" y="970" width="2" height="2"/><rect x="1282" y="959" width="2" height="2"/><rect x="1291" y="959" width="2" height="2"/><rect x="1299" y="959" width="2" height="2"/><rect x="1309" y="959" width="2" height="2"/><rect x="1318" y="959" width="2" height="2"/><rect x="1326" y="959" width="2" height="2"/><rect x="1336" y="958" width="2" height="2"/><rect x="1344" y="957" width="2" height="2"/><rect x="1353" y="958" width="2" height="2"/><rect x="1361" y="959" width="2" height="2"/><rect x="1370" y="958" width="2" height="2"/><rect x="1380" y="958" width="2" height="2"/><rect x="1389" y="958" width="2" height="2"/><rect x="1398" y="958" width="2" height="2"/><rect x="1406" y="958" width="2" height="2"/><rect x="1497" y="955" width="2" height="2"/><rect x="1507" y="956" width="2" height="2"/><rect x="1515" y="956" width="2" height="2"/><rect x="1525" y="955" width="2" height="2"/><rect x="1533" y="955" width="2" height="2"/><rect x="1542" y="956" width="2" height="2"/><rect x="1551" y="955" width="2" height="2"/><rect x="1560" y="956" width="2" height="2"/><rect x="1570" y="956" width="2" height="2"/><rect x="1579" y="955" width="2" height="2"/><rect x="1588" y="956" width="2" height="2"/><rect x="1597" y="954" width="2" height="2"/><rect x="1605" y="955" width="2" height="2"/><rect x="1614" y="955" width="2" height="2"/><rect x="1623" y="955" width="2" height="2"/><rect x="1708" y="959" width="2" height="2"/><rect x="1717" y="958" width="2" height="2"/><rect x="1729" y="957" width="2" height="2"/><rect x="1740" y="958" width="2" height="2"/><rect x="1749" y="957" width="2" height="2"/><rect x="1760" y="956" width="2" height="2"/><rect x="1772" y="956" width="2" height="2"/><rect x="1781" y="955" width="2" height="2"/><rect x="1793" y="954" width="2" height="2"/><rect x="1803" y="953" width="2" height="2"/><rect x="1815" y="952" width="2" height="2"/><rect x="1825" y="952" width="2" height="2"/><rect x="1839" y="953" width="2" height="2"/></g>
<g>
<path d="M1456.400 524.600V542H1448V558C1448 567 1456 573.800 1467 573.800S1486.300 567 1486.300 558V524.600z" fill="#2626e6"/>
<rect x="1477.600" y="526.400" width="6.600" height="16" fill="#c4c4c4"/>
<rect x="1484" y="522" width="2.300" height="24" fill="#2a2af0"/>
<rect x="1449.900" y="526.800" width="5.200" height="15" rx="1.800" fill="#c9c9dc"/><rect x="1451.500" y="526.800" width="1.600" height="15" fill="#e8e8f4"/>
<rect x="1479.200" y="526.800" width="4.600" height="15" rx="1.800" fill="#c9c9dc"/><rect x="1480.600" y="526.800" width="1.500" height="15" fill="#e8e8f4"/>
<rect x="1444.100" y="498" width="41.800" height="26.600" fill="#2828e2"/>
<rect x="1444.100" y="498" width="41.800" height="4" fill="#3535f2"/>
<rect x="1444.100" y="519.600" width="36" height="5" fill="#1a1aa8"/>
<rect x="1480.600" y="498" width="5.300" height="26.600" fill="#3232f4"/>
<rect x="1448" y="497.600" width="6.200" height="15.600" rx="2" fill="#15158c"/>
<rect x="1455.200" y="551" width="23.300" height="12.700" fill="#c6c6c6"/>
<circle cx="1460.600" cy="558" r="2.400" fill="#8c8c8c"/><circle cx="1473.600" cy="557.200" r="2.400" fill="#8c8c8c"/>
<path d="M1483.200 501.500L1466.400 547.500" stroke="#4b4a3a" stroke-width=".8" stroke-dasharray="1.500 1"/>
<path d="M1467.500 533.400V542M1461 549.600V556M1473 549.600V565M1483.300 491V497" stroke="#ee1111" stroke-width="1.200"/>
<path d="M1444 534.500h6M1473 534.500h6M1459 541h7M1453 557.500h8M1465 555.300h6.500M1475 557h6M1475 499.200h5.500" stroke="#19d419" stroke-width="1"/>
<path d="M1475 501.600h5M1486.500 501.600h6.500M1459 543.200h6M1469 543.200h7M1464 559h5M1476 559.500h5" stroke="#f4f4f4" stroke-width="1" stroke-dasharray="1.200 .6"/>
<path d="M1465.800 544.200l3.400 3.600M1469.200 544.200l-3.400 3.600" stroke="#d018a0" stroke-width=".8"/>
<circle cx="1483.500" cy="499.500" r="2" fill="#111" stroke="#ff0d0d" stroke-width="1.300"/>
</g>
</svg>
<div class="abs" style="left:961px;top:983px;width:959px;height:97px;background:#efefef"></div>
<svg class="abs" style="left:1428px;top:984px" width="24" height="4" viewBox="0 0 24 4" fill="#b5b5b5"><rect x="1" y="1.500" width="1" height="1"/><rect x="5" y="1.500" width="1" height="1"/><rect x="9" y="1.500" width="1" height="1"/><rect x="13" y="1.500" width="1" height="1"/><rect x="17" y="1.500" width="1" height="1"/><rect x="21" y="1.500" width="1" height="1"/></svg>
<div class="abs" style="left:961px;top:989.400px;width:959px;height:22.200px;background:#b8b8b8"></div>
<svg class="abs" style="left:963px;top:992px" width="18" height="18" viewBox="963 992 18 18"><circle cx="972" cy="1001" r="7.100" fill="#fff" stroke="#555" stroke-width="1.500"/><path d="M972 996.500v4.700h4" stroke="#222" stroke-width="1.300" fill="none"/></svg>
<div class="t" style="left:986.6px;top:994.0px;font-size:14.4px;color:#1a1a1a;transform:scaleX(1.024);">Time</div>
<div class="abs" style="left:1900.300px;top:992.500px;width:17px;height:16px;background:#f4f4f4;border:1px solid #c9c9c9;border-radius:3px"></div>
<svg class="abs" style="left:1903px;top:994px" width="12" height="12" viewBox="0 0 12 12"><defs><radialGradient id="rg" cx=".4" cy=".3" r=".8"><stop offset="0" stop-color="#f0565a"/><stop offset="1" stop-color="#c00510"/></radialGradient></defs><circle cx="6" cy="6" r="5.300" fill="url(#rg)"/><path d="M3.900 3.900l4.200 4.200M8.100 3.900l-4.200 4.200" stroke="#fff" stroke-width="1.500"/></svg>
<div class="t" style="left:971.6px;top:1025.0px;font-size:13.6px;color:#1a1a1a;transform:scaleX(1.026);">ROS Time:</div>
<div class="fld" style="left:1047.200px;top:1017.300px;width:75.500px"></div>
<div class="t" style="left:1050.6px;top:1025.0px;font-size:13.6px;color:#1a1a1a;transform:scaleX(1.073);">21.24</div>
<div class="t" style="left:1129.2px;top:1025.0px;font-size:13.6px;color:#1a1a1a;transform:scaleX(1.025);">ROS Elapsed:</div>
<div class="fld" style="left:1224px;top:1017.300px;width:120px"></div>
<div class="t" style="left:1227.8px;top:1025.0px;font-size:13.6px;color:#1a1a1a;transform:scaleX(1.064);">16.81</div>
<div class="t" style="left:1350.2px;top:1025.0px;font-size:13.6px;color:#1a1a1a;transform:scaleX(1.093);">Wall Time:</div>
<div class="fld" style="left:1426px;top:1017.300px;width:120.500px"></div>
<div class="t" style="left:1430.0px;top:1025.0px;font-size:13.6px;color:#1a1a1a;transform:scaleX(1.095);">1746886921.54</div>
<div class="t" style="left:1553.0px;top:1025.0px;font-size:13.6px;color:#1a1a1a;transform:scaleX(1.071);">Wall Elapsed:</div>
<div class="fld" style="left:1648px;top:1017.300px;width:119.600px"></div>
<div class="t" style="left:1652.0px;top:1025.0px;font-size:13.6px;color:#1a1a1a;transform:scaleX(1.073);">29.65</div>
<div class="abs" style="left:1794px;top:1023px;width:14px;height:14px;background:#fff;border:1px solid #c2c2c2;border-radius:2px"></div>
<div class="t" style="left:1813.5px;top:1025.0px;font-size:13.6px;color:#1a1a1a;transform:scaleX(1.119);">Experimental</div>
<div class="abs" style="left:962.500px;top:1052.500px;width:52.300px;height:25px;background:linear-gradient(#ffffff,#f1f1f1);border:1px solid #c4c4c4;border-radius:4px"></div>
<div class="t" style="left:969.5px;top:1060.0px;font-size:13.6px;color:#1a1a1a;transform:scaleX(1.064);">Reset</div>
<div class="t" style="left:1021.6px;top:1059.0px;font-size:13.6px;color:#141414;font-weight:bold;transform:scaleX(1.077);">Left-Click:</div>
<div class="t" style="left:1097.2px;top:1059.0px;font-size:13.6px;color:#141414;transform:scaleX(1.102);">Rotate.</div>
<div class="t" style="left:1150.2px;top:1059.0px;font-size:13.6px;color:#141414;font-weight:bold;transform:scaleX(1.079);">Middle-Click:</div>
<div class="t" style="left:1245.2px;top:1059.0px;font-size:13.6px;color:#141414;transform:scaleX(1.088);">Move X/Y.</div>
<div class="t" style="left:1316.0px;top:1059.0px;font-size:13.6px;color:#141414;font-weight:bold;transform:scaleX(1.093);">Right-Click/Mouse Wheel:</div>
<div class="t" style="left:1501.8px;top:1059.0px;font-size:13.6px;color:#141414;transform:scaleX(1.095);">Zoom.</div>
<div class="t" style="left:1548.0px;top:1059.0px;font-size:13.6px;color:#141414;font-weight:bold;transform:scaleX(1.080);">Shift:</div>
<div class="t" style="left:1589.2px;top:1059.0px;font-size:13.6px;color:#141414;transform:scaleX(1.133);">More options.</div>
<div class="t" style="left:1855.0px;top:1056.0px;font-size:13.6px;color:#1a1a1a;transform:scaleX(1.099);">31 fps</div>
<svg class="abs" style="left:1906px;top:1066px" width="14" height="14" viewBox="0 0 14 14" fill="#c4c4c4"><rect x="11" y="2" width="1" height="1"/><rect x="8" y="5" width="1" height="1"/><rect x="11" y="5" width="1" height="1"/><rect x="5" y="8" width="1" height="1"/><rect x="8" y="8" width="1" height="1"/><rect x="11" y="8" width="1" height="1"/><rect x="2" y="11" width="1" height="1"/><rect x="5" y="11" width="1" height="1"/><rect x="8" y="11" width="1" height="1"/><rect x="11" y="11" width="1" height="1"/></svg>
</body></html>
